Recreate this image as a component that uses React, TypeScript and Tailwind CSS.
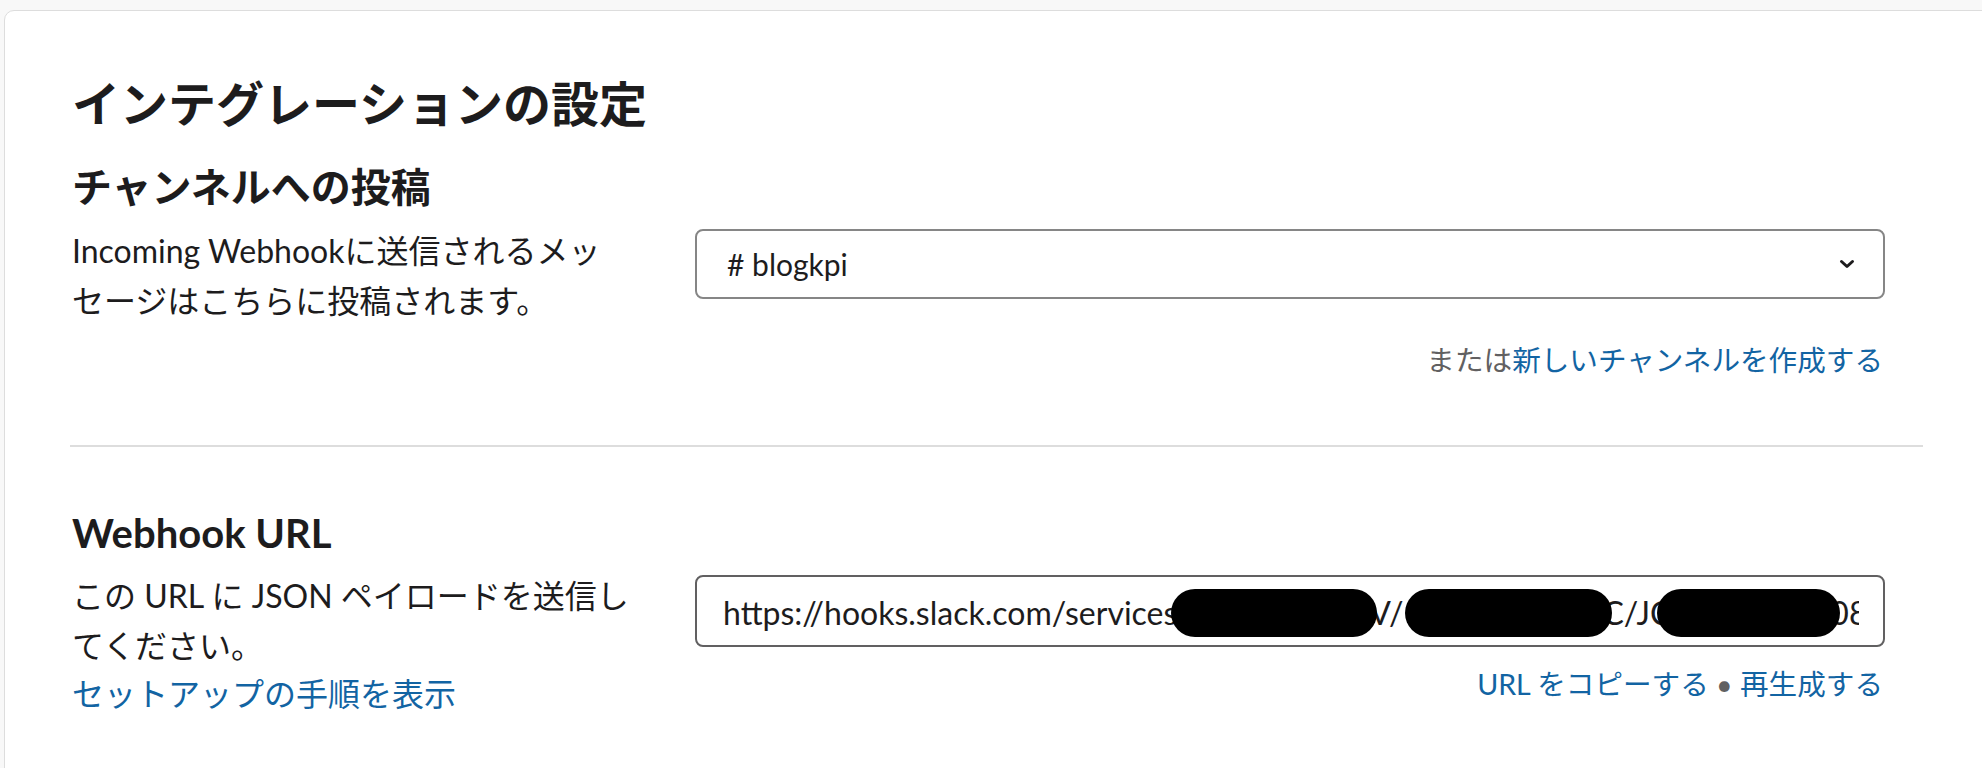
import React from "react";

function Chevron() {
  return (
    <svg width="16" height="10" viewBox="0 0 16 10" fill="none" className="shrink-0">
      <path d="M2.5 2.5 L8 7.5 L13.5 2.5" stroke="#1d1c1d" strokeWidth="3" strokeLinecap="round" strokeLinejoin="round" />
    </svg>
  );
}

function Pill({ w }: { w: string }) {
  return <span className={`relative z-10 inline-block h-[48px] rounded-full bg-black align-middle ${w}`} />;
}

export default function App() {
  return (
    <div className="h-screen w-screen overflow-hidden bg-[#f8f8f8] pl-[4px] pt-[10px] font-['Lato','Noto_Sans_CJK_JP',sans-serif] text-[#1d1c1d]">
      <div className="h-[800px] w-[1990px] rounded-t-[10px] border border-[#dddddd] bg-white pl-[65px] pt-[65px]">
        <div className="w-[1853px]">
          <div className="pl-[2px] pr-[38px]">
            <h1 className="text-[48px] font-bold leading-[56px]">インテグレーションの設定</h1>
            <h2 className="mt-[31px] text-[40px] font-bold leading-[48px]">チャンネルへの投稿</h2>
            <div className="mt-[15px] flex">
              <div className="w-[623px] shrink-0 whitespace-nowrap text-[32px] leading-[50px]">
                Incoming Webhookに送信されるメッ
                <br />
                セージはこちらに投稿されます。
              </div>
              <div className="min-w-0 flex-1 pt-[3px]">
                <div className="flex h-[70px] items-center justify-between rounded-[8px] border-2 border-[#868686] pl-[30px] pr-[28px] text-[30px] leading-[36px]">
                  <span># blogkpi</span>
                  <Chevron />
                </div>
                <div className="mt-[41px] pr-[2px] text-right text-[28.6px] leading-[40px]">
                  <span className="text-[#616061]">または</span>
                  <span className="text-[#1264a3]">新しいチャンネルを作成する</span>
                </div>
              </div>
            </div>
          </div>

          <div className="mt-[65px] h-[2px] bg-[#dddddd]" />

          <div className="pl-[2px] pr-[38px]">
            <h2 className="mt-[62px] text-[40px] font-bold leading-[48px]">Webhook URL</h2>
            <div className="mt-[14px] flex">
              <div className="w-[623px] shrink-0 whitespace-nowrap text-[32px] leading-[50px]">
                <div>
                  この URL に JSON ペイロードを送信し
                  <br />
                  てください。
                </div>
                <div className="-mt-[2px] text-[#1264a3]">セットアップの手順を表示</div>
              </div>
              <div className="min-w-0 flex-1 pt-[4px]">
                <div className="flex h-[72px] items-center overflow-hidden rounded-[8px] border-2 border-[#616061] pl-[26px] pr-[24px]">
                  <div className="min-w-0 flex-1 overflow-hidden whitespace-nowrap text-[32px] leading-[48px]">
                    <span className="align-middle">https://hooks.slack.com/services</span>
                    <Pill w="w-[206px] -ml-[6px]" />
                    <span className="-ml-[8px] align-middle">V/</span>
                    <Pill w="w-[207px] ml-[2px]" />
                    <span className="-ml-[10px] align-middle">C/JC</span>
                    <Pill w="w-[183px] -ml-[14px]" />
                    <span className="-ml-[10px] align-middle">08a1f3</span>
                  </div>
                </div>
                <div className="mt-[17px] pr-[2px] text-right text-[28.6px] leading-[40px]">
                  <span className="text-[#1264a3]">URL をコピーする</span>
                  <span className="text-[#616061]"> • </span>
                  <span className="text-[#1264a3]">再生成する</span>
                </div>
              </div>
            </div>
          </div>
        </div>
      </div>
    </div>
  );
}
